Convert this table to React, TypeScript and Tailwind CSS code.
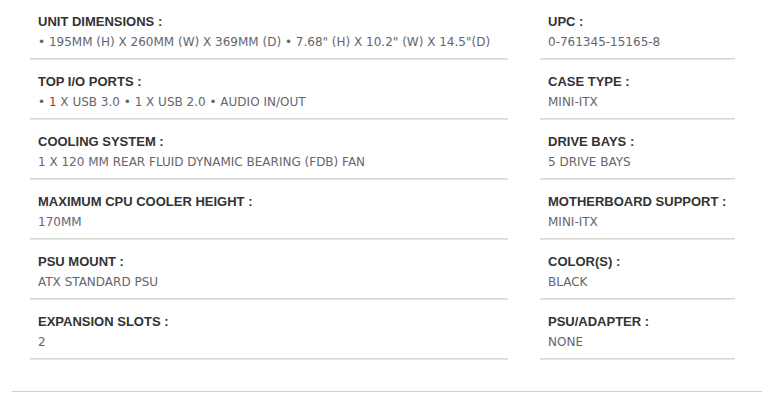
import React from "react";

const left: { t: string; v: React.ReactNode }[] = [
  { t: "UNIT DIMENSIONS :", v: <>• 195MM (H) X 260MM (W) X 369MM (D) • 7.68" (H) X 10.2" (W) X 14.5"(D)</> },
  { t: "TOP I/O PORTS :", v: <>• <span className="text-[#cc2222]">1</span> X USB 3.0 • 1 X USB 2.0 • AUDIO IN/OUT</> },
  { t: "COOLING SYSTEM :", v: <>1 X 120 MM REAR FLUID DYNAMIC BEARING (FDB) FAN</> },
  { t: "MAXIMUM CPU COOLER HEIGHT :", v: <>170MM</> },
  { t: "PSU MOUNT :", v: <>ATX STANDARD PSU</> },
  { t: "EXPANSION SLOTS :", v: <>2</> },
];

const right: { t: string; v: string }[] = [
  { t: "UPC :", v: "0-761345-15165-8" },
  { t: "CASE TYPE :", v: "MINI-ITX" },
  { t: "DRIVE BAYS :", v: "5 DRIVE BAYS" },
  { t: "MOTHERBOARD SUPPORT :", v: "MINI-ITX" },
  { t: "COLOR(S) :", v: "BLACK" },
  { t: "PSU/ADAPTER :", v: "NONE" },
];

function Row({ t, v }: { t: string; v: React.ReactNode }) {
  return (
    <div className="flex h-[60px] flex-col">
      <div className="flex-1 pl-2 pt-[12px]">
        <div
          className="whitespace-nowrap text-[13px] font-bold leading-[20px] text-[#333333]"
          style={{ fontFamily: "'Liberation Sans', Arial, sans-serif" }}
        >
          {t}
        </div>
        <div className="whitespace-nowrap text-[12px] leading-[20px] text-[#65656e]">{v}</div>
      </div>
      <div className="box-border h-[2px] border-t border-dotted border-[#d0d0c8] bg-[#e6e6e0]" />
    </div>
  );
}

export default function App() {
  return (
    <div className="w-[769px] h-[403px] bg-white" style={{ fontFamily: "'DejaVu Sans', sans-serif" }}>
      <div className="flex pl-[30px]">
        <div className="w-[478px]">
          {left.map((r) => (
            <Row key={r.t} t={r.t} v={r.v} />
          ))}
        </div>
        <div className="ml-[32px] w-[195px]">
          {right.map((r) => (
            <Row key={r.t} t={r.t} v={r.v} />
          ))}
        </div>
      </div>
      <div className="mx-[12px] mt-[31px] h-px w-[750px] bg-[#cfcfc8]" />
    </div>
  );
}
